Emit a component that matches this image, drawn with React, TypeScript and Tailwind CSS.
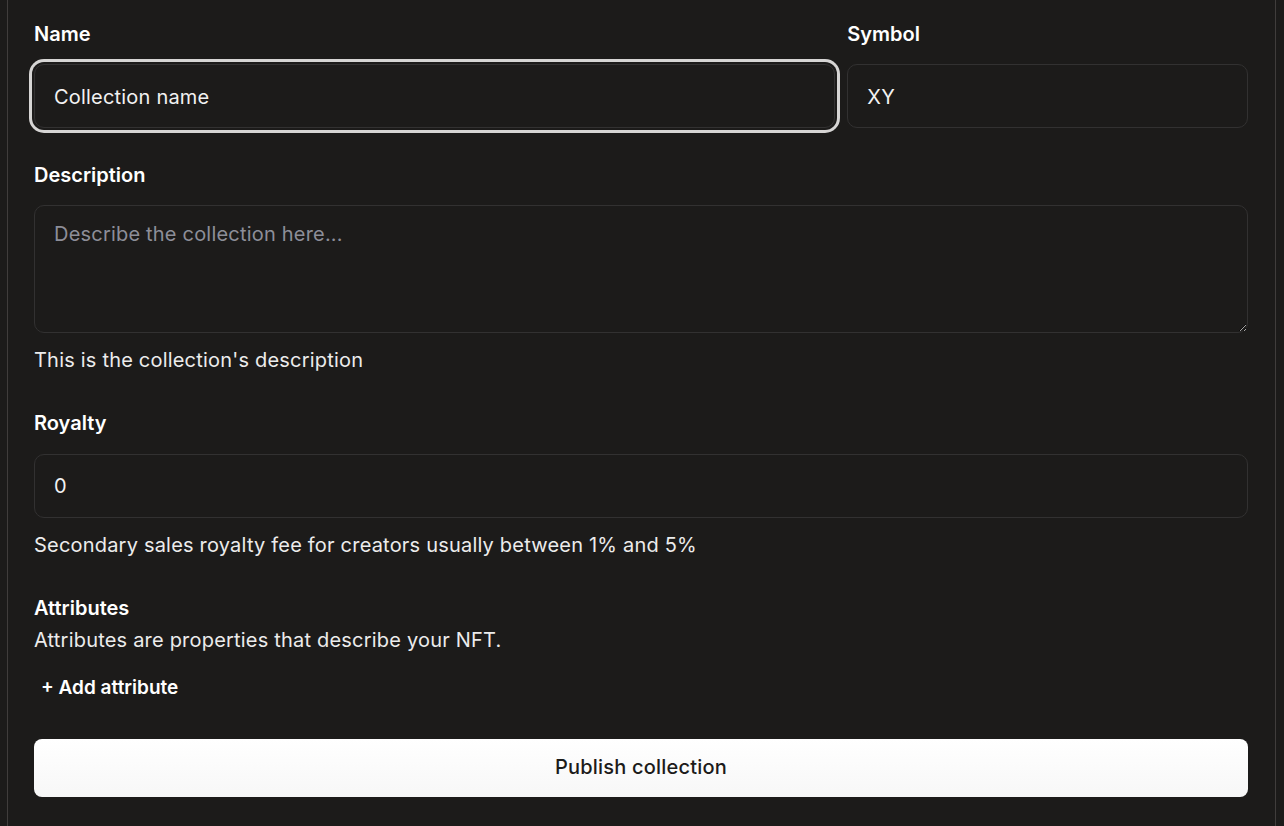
import React from 'react';

const labelCls = 'block text-[20px] font-semibold leading-[24px] text-white';
const inputCls =
  'h-[64px] w-full rounded-[10px] border border-[#323131] bg-[#1c1b1a] px-[19px] text-[20px] tracking-[0.2px] text-[#f2f2f2] outline-none placeholder:text-[#8d8e98]';
const helpCls = 'text-[20px] leading-[24px] tracking-[0.2px] text-[#ececec]';

export default function App() {
  return (
    <div
      className="min-h-screen bg-[#1c1b1a] pl-[7px] pr-[8px]"
      style={{ fontFamily: 'Inter, "Noto Sans", sans-serif' }}
    >
      <div className="min-h-screen border-x border-[#403d3c] bg-[#1c1b1a] pl-[26px] pr-[27px] pt-[22px] pb-[29px]">
        <form className="flex flex-col" onSubmit={(e) => e.preventDefault()}>
          {/* name + symbol */}
          <div className="grid grid-cols-[2fr_1fr] gap-x-[12px]">
            <div>
              <label className={labelCls}>Name</label>
              <input
                autoFocus
                className={`${inputCls} mt-[18px] pt-[2px] ring-3 ring-[#d6d5d4] ring-offset-2 ring-offset-[#1c1b1a] caret-white`}
                defaultValue="Collection name"
              />
            </div>
            <div>
              <label className={labelCls}>Symbol</label>
              <input className={`${inputCls} mt-[18px] pt-[2px]`} defaultValue="XY" />
            </div>
          </div>

          {/* description */}
          <div className="mt-[35px]">
            <label className={labelCls}>Description</label>
            <textarea
              className="mt-[18px] block h-[128px] w-full rounded-[10px] border border-[#323131] bg-[#1c1b1a] px-[19px] py-[16px] text-[20px] leading-[24px] tracking-[0.2px] text-[#f2f2f2] outline-none placeholder:text-[#8d8e98]"
              placeholder="Describe the collection here..."
            />
            <p className={`${helpCls} mt-[15px]`}>This is the collection's description</p>
          </div>

          {/* royalty */}
          <div className="mt-[39px]">
            <label className={labelCls}>Royalty</label>
            <input className={`${inputCls} mt-[19px]`} defaultValue="0" />
            <p className={`${helpCls} mt-[15px]`}>
              Secondary sales royalty fee for creators usually between 1% and 5%
            </p>
          </div>

          {/* attributes */}
          <div className="mt-[39px]">
            <label className={labelCls}>Attributes</label>
            <p className={`${helpCls} mt-[8px]`}>Attributes are properties that describe your NFT.</p>
            <button
              type="button"
              className="mt-[24px] ml-[7px] text-[19px] font-semibold leading-[24px] text-white"
            >
              + Add attribute
            </button>
          </div>

          <button
            type="submit"
            className="mt-[39px] h-[58px] w-full rounded-[8px] bg-gradient-to-b from-white to-[#f7f7f7] pb-[3px] text-[20px] font-medium tracking-[0.2px] text-[#1c1b1a]"
          >
            Publish collection
          </button>
        </form>
      </div>
    </div>
  );
}
